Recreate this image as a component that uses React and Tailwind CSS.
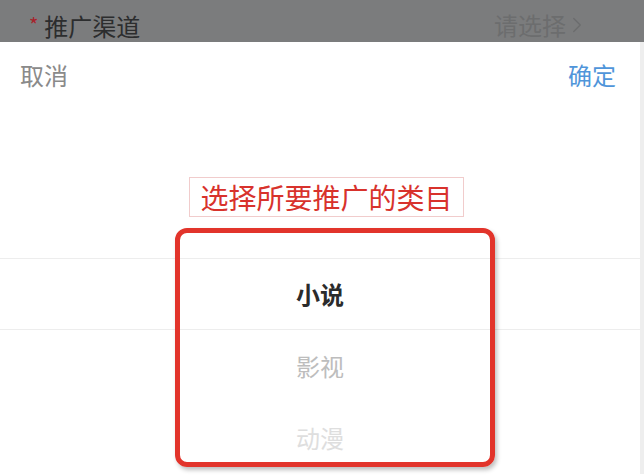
import { ChevronRight } from 'lucide-react';

const items = ['', '', '小说', '影视', '动漫'];

const itemColor = (i) => {
  if (i === 2) return 'text-[#2b2b2b] font-bold';
  if (i === 3) return 'text-[#bdbdbd]';
  return 'text-[#dedede]';
};

export default function App() {
  return (
    <div className="relative w-[644px] h-[476px] overflow-hidden bg-white font-['Noto_Sans_CJK_SC',sans-serif]">
      {/* form row behind the mask */}
      <div className="h-[42px] bg-[#7b7c7d] flex items-end justify-between pl-[29px] pr-[54px] pb-[4px]">
        <div className="flex items-start">
          <span className="text-[20px] leading-none text-[#a8222b] mt-[1px] mr-[6px]">*</span>
          <span className="text-[24px] leading-none text-[#2c2d2e]">推广渠道</span>
        </div>
        <div className="flex items-center text-[#6c6d6e]">
          <span className="text-[24px] leading-none">请选择</span>
          <ChevronRight size={26} strokeWidth={1.3} className="-ml-[2px]" />
        </div>
      </div>

      {/* picker sheet */}
      <div className="border-r-4 border-[#eeeeee]">
        <div className="h-[66px] flex items-center justify-between pl-[20px] pr-[24px] text-[24px] leading-none">
          <span className="text-[#8a8a8a]">取消</span>
          <span className="text-[#4f95da]">确定</span>
        </div>
        <div className="pt-[6px]">
          {items.map((label, i) => (
            <div
              key={i}
              className={`h-[72px] flex items-center justify-center text-[24px] leading-none ${
                i === 2 ? 'border-y border-[#ededed]' : ''
              } ${itemColor(i)}`}
            >
              {label}
            </div>
          ))}
        </div>
      </div>

      {/* annotations */}
      <div className="absolute left-[189px] top-[177px] w-[275px] h-[40px] border border-[#f1cccc] flex items-center justify-center text-[28px] leading-none text-[#d8322c]">
        选择所要推广的类目
      </div>
      <div className="absolute left-[175px] top-[228px] w-[320px] h-[239px] border-[5px] border-[#e2342b] rounded-[12px] shadow-[2px_3px_4px_rgba(0,0,0,0.25)]" />
    </div>
  );
}
